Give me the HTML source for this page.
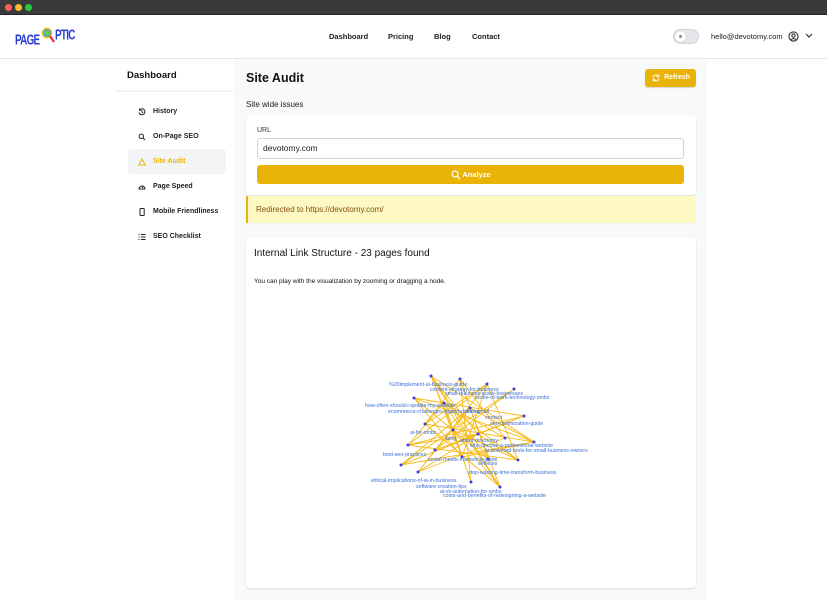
<!DOCTYPE html>
<html><head><style>
*{box-sizing:border-box;margin:0;padding:0}
body{width:827px;height:600px;overflow:hidden;background:#fff;font-family:"Liberation Sans",sans-serif;color:#111;position:relative}
.chrome{position:absolute;left:0;top:0;width:827px;height:15px;background:#3a3a3a;border-bottom:1px solid #222}
.dot{position:absolute;top:4px;width:7px;height:7px;border-radius:50%}
.hdr{position:absolute;top:15px;left:0;width:827px;height:44px;border-bottom:1px solid #e5e7eb;background:#fff}
.nav{position:absolute;top:17px;font-size:7.5px;font-weight:bold;color:#222}
.side{position:absolute;left:115px;top:59px;width:119px;height:541px;background:#fff}
.main{position:absolute;left:234px;top:59px;width:473px;height:541px;background:#f8f9fa}
.si{position:absolute;left:13px;width:98px;height:25px;font-size:7px;font-weight:bold;color:#222;line-height:25px;padding-left:25px;border-radius:4px}
.si svg{position:absolute;left:10px;top:9px}
.card{position:absolute;background:#fff;border-radius:4px;box-shadow:0 1px 2px rgba(0,0,0,.12)}
</style></head><body>
<div class="chrome"><div class="dot" style="left:5px;background:#fe5f57"></div><div class="dot" style="left:15px;background:#febc2e"></div><div class="dot" style="left:25px;background:#28c840"></div></div>
<div class="hdr">
 <div style="position:absolute;left:15px;top:18px;font-size:11px;font-weight:bold;color:#2a3cd6;letter-spacing:-0.8px;transform:scale(0.9,1.3);transform-origin:left top">PAGE</div>
 <svg style="position:absolute;left:41px;top:12px" width="14" height="16"><circle cx="6" cy="6" r="4.5" fill="#3ab0e0" stroke="#f0b400" stroke-width="1.5"/><circle cx="6" cy="6" r="2" fill="#7c3"/><line x1="9" y1="9" x2="13" y2="15" stroke="#e02020" stroke-width="2"/></svg>
 <div style="position:absolute;left:55px;top:13px;font-size:11px;font-weight:bold;color:#2a3cd6;letter-spacing:-0.8px;transform:scale(0.9,1.3);transform-origin:left top">PTIC</div>
 <div class="nav" style="left:329px">Dashboard</div>
 <div class="nav" style="left:388px">Pricing</div>
 <div class="nav" style="left:434px">Blog</div>
 <div class="nav" style="left:472px">Contact</div>
 <div style="position:absolute;left:673px;top:14px;width:26px;height:15px;border-radius:8px;background:#e5e7eb;box-shadow:inset 0 0 0 1px #d1d5db"><div style="position:absolute;left:2px;top:2px;width:11px;height:11px;border-radius:50%;background:#fff;box-shadow:0 0 1px #999"></div><div style="position:absolute;left:6px;top:6px;width:3px;height:3px;border-radius:50%;background:#888"></div></div>
 <div class="nav" style="left:711px;font-weight:normal;color:#222">hello@devotomy.com</div>
 <svg style="position:absolute;left:788px;top:16px" width="11" height="11" viewBox="0 0 12 12"><circle cx="6" cy="6" r="5" fill="none" stroke="#333" stroke-width="1.2"/><circle cx="6" cy="5" r="1.8" fill="none" stroke="#333" stroke-width="1.1"/><path d="M3 9.5q3-2.5 6 0" fill="none" stroke="#333" stroke-width="1.1"/></svg>
 <svg style="position:absolute;left:805px;top:18px" width="8" height="6"><path d="M1 1l3 3 3-3" fill="none" stroke="#333" stroke-width="1.2"/></svg>
</div>
<div class="side">
 <div style="position:absolute;left:12px;top:11px;font-size:9.5px;font-weight:bold;color:#111">Dashboard</div>
 <div style="position:absolute;left:0;top:31px;width:119px;height:2px;background:#f3f4f6"></div>
 <div class="si" style="top:40px"><svg width="8" height="8" viewBox="0 0 8 8"><path d="M1.5 2A3 3 0 1 1 1 4.5M1.5 .5v1.7h1.7M4 2.3V4l1.2 .8" fill="none" stroke="#222" stroke-width="1"/></svg>History</div>
 <div class="si" style="top:65px"><svg width="8" height="8" viewBox="0 0 8 8"><circle cx="3.3" cy="3.3" r="2.2" fill="none" stroke="#222" stroke-width="1"/><path d="M5 5l2 2" stroke="#222" stroke-width="1"/></svg>On-Page SEO</div>
 <div class="si" style="top:90px;background:#f3f4f6;color:#eab308"><svg width="8" height="8" viewBox="0 0 8 8"><path d="M4 1L7.3 7H.7z" fill="none" stroke="#eab308" stroke-width="1"/></svg>Site Audit</div>
 <div class="si" style="top:115px"><svg width="8" height="8" viewBox="0 0 8 8"><path d="M1 6a3 3 0 1 1 6 0zM4 5l1.5-2" fill="none" stroke="#222" stroke-width="1"/></svg>Page Speed</div>
 <div class="si" style="top:140px"><svg width="8" height="8" viewBox="0 0 8 8"><rect x="2" y=".5" width="4.2" height="7" rx=".8" fill="none" stroke="#222" stroke-width="1"/></svg>Mobile Friendliness</div>
 <div class="si" style="top:165px"><svg width="8" height="8" viewBox="0 0 8 8"><path d="M.5 1.5h1M3 1.5h4.5M.5 4h1M3 4h4.5M.5 6.5h1M3 6.5h4.5" stroke="#222" stroke-width="1"/></svg>SEO Checklist</div>
</div>
<div class="main">
 <div style="position:absolute;left:12px;top:12px;font-size:12.5px;font-weight:bold">Site Audit</div>
 <div style="position:absolute;left:411px;top:10px;width:51px;height:18px;background:#eab308;border-radius:3px;box-shadow:0 1px 1px rgba(0,0,0,.15)"><svg style="position:absolute;left:7px;top:5px" width="8" height="8" viewBox="0 0 8 8"><path d="M1 3.5A3 3 0 0 1 6.5 2.5M7 4.5A3 3 0 0 1 1.5 5.5M6.7 .8v2H4.7M1.3 7.2v-2h2" fill="none" stroke="#fff" stroke-width="1"/></svg><div style="position:absolute;left:19px;top:5px;color:#fff;font-size:7px;font-weight:bold;line-height:8px">Refresh</div></div>
 <div style="position:absolute;left:12px;top:41px;font-size:8px;color:#222">Site wide issues</div>
 <div class="card" style="left:12px;top:56px;width:450px;height:80px">
  <div style="position:absolute;left:11px;top:12px;font-size:7px;color:#333">URL</div>
  <div style="position:absolute;left:11px;top:23px;width:427px;height:21px;border:1px solid #d1d5db;border-radius:3px;font-size:8.5px;line-height:19px;padding-left:5px;color:#222">devotomy.com</div>
  <div style="position:absolute;left:11px;top:50px;width:427px;height:19px;background:#eab308;border-radius:3px;color:#fff;font-size:7.5px;font-weight:bold;line-height:19px;text-align:center"><svg style="position:absolute;left:194px;top:5px" width="10" height="10" viewBox="0 0 10 10"><circle cx="4" cy="4" r="3" fill="none" stroke="#fff" stroke-width="1.2"/><path d="M6.2 6.2l3 3" stroke="#fff" stroke-width="1.2"/></svg><span style="padding-left:12px">Analyze</span></div>
 </div>
 <div style="position:absolute;left:12px;top:137px;width:450px;height:27px;background:#fef9c3;border-left:2px solid #eab308;font-size:8px;color:#854d0e;line-height:27px;padding-left:8px">Redirected to https://devotomy.com/</div>
 <div class="card" style="left:12px;top:179px;width:450px;height:350px">
  <div style="position:absolute;left:8px;top:10px;font-size:10px;color:#111">Internal Link Structure - 23 pages found</div>
  <div style="position:absolute;left:8px;top:40px;font-size:6.5px;color:#111">You can play with the visualization by zooming or dragging a node.</div>
 </div>
</div>
<svg style="position:absolute;left:0;top:0" width="827" height="600">
<g stroke="#f5b301" stroke-width="0.9" opacity="0.9">
<path d="M431 376L478 434M431 376L453 430M431 376L534 442M460 379L425 424M460 379L505 438M487 384L408 445M487 384L462 457M514 389L401 465M514 389L453 430M414 398L488 459M414 398L524 416M444 403L518 460M444 403L408 445M470 408L418 472M470 408L534 442M524 416L401 465M524 416L435 450M425 424L534 442M425 424L500 487M453 430L518 460M453 430L471 482M478 434L408 445M478 434L401 465M505 438L418 472M505 438L444 403M534 442L462 457M408 445L524 416M435 450L514 389M462 457L431 376M488 459L460 379M518 460L487 384M418 472L478 434M471 482L444 403M500 487L470 408M401 465L534 442M431 376L500 487M460 379L471 482M487 384L418 472M514 389L435 450M414 398L534 442M470 408L401 465M453 430L500 487M478 434L518 460M425 424L487 384M408 445L518 460M462 457L414 398M435 450L524 416M444 403L500 487M488 459L431 376"/>
</g>
<g fill="#3b3bf0"><circle cx="431" cy="376" r="1.5"/><circle cx="460" cy="379" r="1.5"/><circle cx="487" cy="384" r="1.5"/><circle cx="514" cy="389" r="1.5"/><circle cx="414" cy="398" r="1.5"/><circle cx="444" cy="403" r="1.5"/><circle cx="470" cy="408" r="1.5"/><circle cx="524" cy="416" r="1.5"/><circle cx="425" cy="424" r="1.5"/><circle cx="453" cy="430" r="1.5"/><circle cx="478" cy="434" r="1.5"/><circle cx="505" cy="438" r="1.5"/><circle cx="534" cy="442" r="1.5"/><circle cx="408" cy="445" r="1.5"/><circle cx="435" cy="450" r="1.5"/><circle cx="462" cy="457" r="1.5"/><circle cx="488" cy="459" r="1.5"/><circle cx="518" cy="460" r="1.5"/><circle cx="418" cy="472" r="1.5"/><circle cx="471" cy="482" r="1.5"/><circle cx="500" cy="487" r="1.5"/><circle cx="401" cy="465" r="1.5"/></g>
<g fill="#3a6fd8" font-size="5.3" font-family="Liberation Sans,sans-serif">
<text x="389" y="386">%20implement-ai-business-guide</text>
<text x="430" y="391">content-strategy-for-business</text>
<text x="445" y="395">small-business-guide-businesses</text>
<text x="475" y="399">future-of-work-technology-smbs</text>
<text x="365" y="407">how-often-should-i-update-my-website</text>
<text x="388" y="413">ecommerce-challenges-opportunities-small</text>
<text x="465" y="413">pricing</text>
<text x="485" y="419">contact</text>
<text x="490" y="425">seo-optimization-guide</text>
<text x="410" y="434">ai-for-smbs</text>
<text x="446" y="440">blog</text>
<text x="460" y="442">about-devotomy</text>
<text x="470" y="447">why-choose-a-professional-website</text>
<text x="485" y="452">ai-powered-tools-for-small-business-owners</text>
<text x="383" y="456">best-seo-practices</text>
<text x="428" y="461">social-media-marketing-guide</text>
<text x="478" y="465">services</text>
<text x="468" y="474">stop-wasting-time-transform-business</text>
<text x="371" y="482">ethical-implications-of-ai-in-business</text>
<text x="416" y="488">software-creation-tips</text>
<text x="440" y="493">ai-vs-automation-for-smbs</text>
<text x="443" y="497">costs-and-benefits-of-redesigning-a-website</text>
</g>
</svg>
</body></html>
